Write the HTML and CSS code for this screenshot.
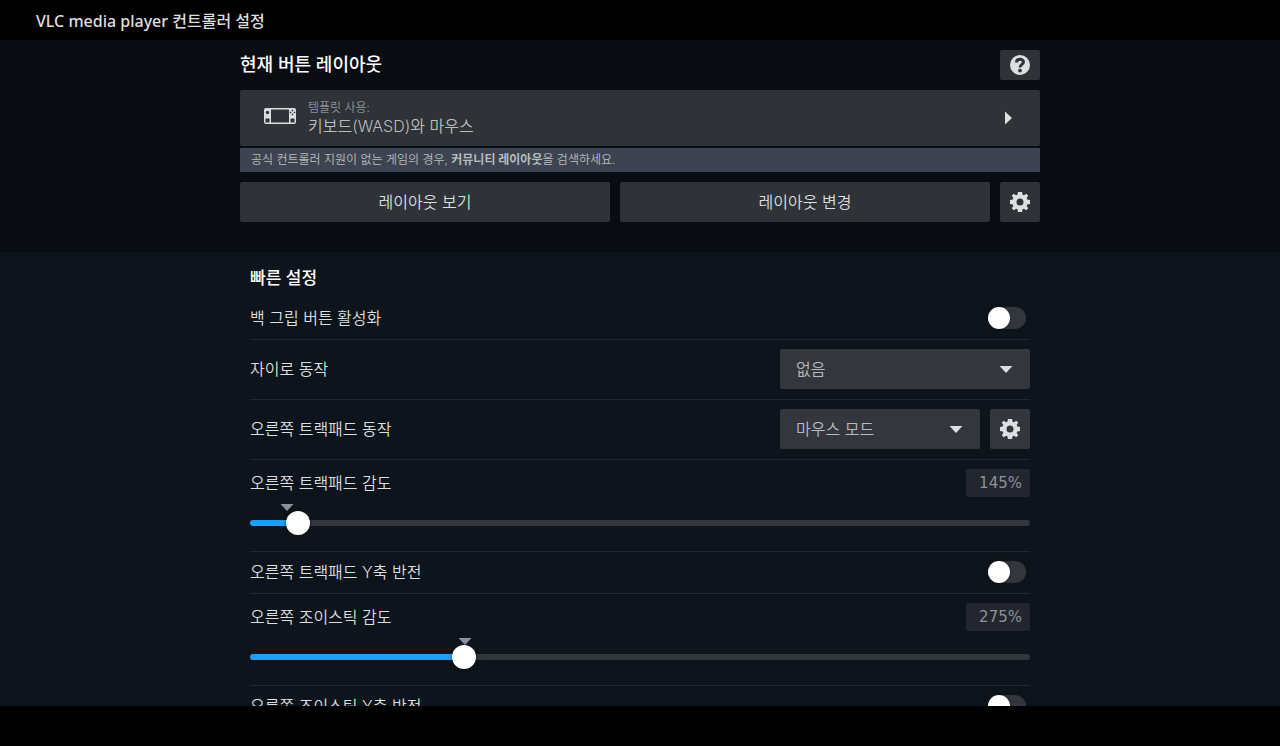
FILE: index.html
```html
<!DOCTYPE html>
<html lang="ko">
<head>
    <meta charset="UTF-8">
    <meta name="viewport" content="width=device-width, initial-scale=1.0">
    <title>VLC media player 컨트롤러 설정</title>
    <link rel="stylesheet" href="styles.css">
</head>
<body>
    <!-- shared icons -->
    <svg class="sprite" aria-hidden="true">
        <symbol id="gear" viewBox="0 0 20 20">
            <path fill-rule="evenodd" d="M8 0h4l.6 2.7 1.3.6L16.300 1.800 18.200 3.700 16.700 6.100 17.300 7.400 20 8v4l-2.700.6-.6 1.300 1.500 2.400-1.900 1.900-2.400-1.500-1.300.6L12 20H8l-.6-2.700-1.300-.6-2.400 1.500-1.900-1.900 1.500-2.400-.6-1.300L0 12V8l2.700-.6.6-1.300L1.800 3.700 3.700 1.800l2.400 1.500 1.300-.6zM10 6.500a3.500 3.500 0 1 0 0 7a3.500 3.500 0 0 0 0-7z"/>
        </symbol>
    </svg>

    <header class="titlebar">VLC media player 컨트롤러 설정</header>

    <main class="content">
        <section class="current">
            <div class="column">
                <div class="current-head">
                    <h1>현재 버튼 레이아웃</h1>
                    <button class="icon-button short" aria-label="도움말">
                        <svg width="20" height="20" viewBox="0 0 20 20">
                            <circle cx="10" cy="10" r="10"/>
                            <path class="cut-line" d="M6.500 7.500C6.500 3.300 13.500 3.300 13.500 7c0 2.400-3.500 2.400-3.500 5.500"/>
                            <circle class="cut" cx="10" cy="15.600" r="1.900"/>
                        </svg>
                    </button>
                </div>

                <button class="layout-card">
                    <svg class="deck" width="32" height="16" viewBox="0 0 32 16">
                        <path fill-rule="evenodd" d="M2 0h28a2 2 0 0 1 2 2v12a2 2 0 0 1-2 2H2a2 2 0 0 1-2-2V2a2 2 0 0 1 2-2zM7 1.500v13h18v-13z"/>
                        <circle class="cut" cx="3.500" cy="4.500" r="1.700"/>
                        <rect class="cut" x="1.500" y="10.500" width="4" height="4" rx=".6"/>
                        <rect class="cut" x="26.500" y="10.500" width="4" height="4" rx=".6"/>
                        <path class="cut" d="M27.700 1.800h1.500v1.500h-1.500zM27.700 5.700h1.500v1.500h-1.500zM25.800 3.700h1.500v1.500h-1.500zM29.700 3.700h1.500v1.500h-1.500z"/>
                    </svg>
                    <span class="layout-text">
                        <span class="layout-kind">템플릿 사용:</span>
                        <span class="layout-name">키보드(WASD)와 마우스</span>
                    </span>
                    <svg width="7" height="14" viewBox="0 0 7 14"><path d="M0 0.500l7 6.500-7 6.500z"/></svg>
                </button>
                <p class="notice">공식 컨트롤러 지원이 없는 게임의 경우, <b>커뮤니티 레이아웃</b>을 검색하세요.</p>

                <div class="actions">
                    <button class="action">레이아웃 보기</button>
                    <button class="action">레이아웃 변경</button>
                    <button class="icon-button" aria-label="레이아웃 설정"><svg width="20" height="20"><use href="#gear"/></svg></button>
                </div>
            </div>
        </section>

        <section class="quick">
            <h2>빠른 설정</h2>

            <div class="row">
                <label for="backGrip">백 그립 버튼 활성화</label>
                <input class="toggle" type="checkbox" id="backGrip">
            </div>

            <div class="row">
                <label for="gyro">자이로 동작</label>
                <div class="select-box wide">
                    <select id="gyro"><option>없음</option></select>
                    <svg width="14" height="7" viewBox="0 0 14 7"><path d="M.5 0h13L7 7z"/></svg>
                </div>
            </div>

            <div class="row">
                <label for="rightPad">오른쪽 트랙패드 동작</label>
                <div class="select-box">
                    <select id="rightPad"><option>마우스 모드</option></select>
                    <svg width="14" height="7" viewBox="0 0 14 7"><path d="M.5 0h13L7 7z"/></svg>
                </div>
                <button class="icon-button light" aria-label="트랙패드 설정"><svg width="20" height="20"><use href="#gear"/></svg></button>
            </div>

            <div class="slider-row">
                <div class="slider-head">
                    <label for="padSense">오른쪽 트랙패드 감도</label>
                    <output class="amount" for="padSense">145%</output>
                </div>
                <div class="slider">
                    <svg class="marker" style="left: 4.7%" width="14" height="7" viewBox="0 0 14 7"><path d="M.5 0h13L7 7z"/></svg>
                    <input type="range" id="padSense" min="117" max="709" value="145" style="--fill: 6%">
                </div>
            </div>

            <div class="row">
                <label for="padInvert">오른쪽 트랙패드 Y축 반전</label>
                <input class="toggle" type="checkbox" id="padInvert">
            </div>

            <div class="slider-row">
                <div class="slider-head">
                    <label for="stickSense">오른쪽 조이스틱 감도</label>
                    <output class="amount" for="stickSense">275%</output>
                </div>
                <div class="slider">
                    <svg class="marker" style="left: 27.5%" width="14" height="7" viewBox="0 0 14 7"><path d="M.5 0h13L7 7z"/></svg>
                    <input type="range" id="stickSense" min="117" max="709" value="275" style="--fill: 27%">
                </div>
            </div>

            <div class="row">
                <label for="stickInvert">오른쪽 조이스틱 Y축 반전</label>
                <input class="toggle" type="checkbox" id="stickInvert">
            </div>
        </section>
    </main>

    <footer class="footer"></footer>
</body>
</html>
```
FILE: styles.css
```css
* {
    box-sizing: border-box;
}

body {
    display: flex;
    flex-direction: column;
    height: 100vh;
    margin: 0;
    overflow: hidden;
    background: #000;
    color: #dcdedf;
    font-family: Inter, "Noto Sans CJK KR", sans-serif;
    font-size: 16px;
    font-weight: 350;
    line-height: 20px;
}

h1, h2, p {
    margin: 0;
}

button, select, input {
    font: inherit;
    color: inherit;
    border: none;
    margin: 0;
}

button {
    cursor: pointer;
}

svg {
    display: block;
    flex: none;
    fill: #dcdedf;
}

.sprite {
    position: absolute;
    width: 0;
    height: 0;
}

.titlebar {
    flex: none;
    padding: 11px 36px 9px;
    font-family: "Noto Sans", "Noto Sans CJK KR", sans-serif;
    font-weight: 500;
}

.content {
    flex: 1;
    min-height: 0;
    overflow: hidden;
    background: #0e141b;
}

.footer {
    flex: none;
    height: 40px;
}

/* Current layout */
.current {
    padding: 10px 20px 30px;
    background: #090c11;
}

.column {
    max-width: 800px;
    margin: 0 auto;
}

.current-head {
    display: flex;
    justify-content: space-between;
    align-items: center;
    margin-bottom: 10px;
}

h1 {
    color: #fff;
    font-size: 18px;
    font-weight: 500;
}

.icon-button {
    display: flex;
    flex: none;
    justify-content: center;
    align-items: center;
    width: 40px;
    height: 40px;
    padding: 0;
    border-radius: 2px;
    background: #2f3237;
}

.icon-button.short {
    height: 30px;
}

.icon-button.light {
    background: #33363d;
}

.cut {
    fill: #2f3237;
}

.cut-line {
    fill: none;
    stroke: #2f3237;
    stroke-width: 3;
}

.layout-card {
    display: flex;
    align-items: center;
    width: 100%;
    height: 56px;
    padding: 0 28px 0 24px;
    border-radius: 2px;
    background: #2f3237;
    text-align: left;
}

.deck {
    margin-bottom: 4px;
}

.layout-text {
    display: flex;
    flex: 1;
    flex-direction: column;
    padding-left: 12px;
}

.layout-kind {
    color: #8b929a;
    font-size: 12px;
    line-height: 16px;
}

.layout-name {
    color: #b8bcbf;
}

.notice {
    margin-top: 2px;
    padding: 0 11px;
    background: #3d4450;
    color: #b8bcbf;
    font-size: 12px;
    line-height: 24px;
}

.notice b {
    font-weight: 700;
}

.actions {
    display: flex;
    gap: 10px;
    margin-top: 10px;
}

.action {
    flex: 1;
    height: 40px;
    border-radius: 2px;
    background: #2f3237;
}

/* Quick settings */
.quick {
    max-width: 780px;
    margin: 0 auto;
    padding-top: 16px;
}

h2 {
    margin-bottom: 10px;
    color: #fff;
    font-size: 17px;
    font-weight: 500;
}

.row {
    display: flex;
    align-items: center;
    gap: 10px;
    padding: 9px 0 10px;
    border-bottom: 1px solid #23262e;
}

.row label {
    flex: 1;
}

.toggle {
    appearance: none;
    width: 38px;
    height: 22px;
    margin-right: 4px;
    border-radius: 11px;
    background: #33363d;
}

.toggle::before {
    content: "";
    display: block;
    width: 22px;
    height: 22px;
    border-radius: 50%;
    background: #fff;
    box-shadow: 0 0 4px rgba(0, 0, 0, 0.3);
}

.toggle:checked {
    background: #1a9fff;
}

.toggle:checked::before {
    margin-left: 16px;
}

.select-box {
    position: relative;
    width: 200px;
}

.select-box.wide {
    width: 250px;
}

.select-box select {
    appearance: none;
    display: block;
    width: 100%;
    height: 40px;
    padding: 0 40px 0 16px;
    border-radius: 2px;
    background: #33363d;
    color: #b8bcbf;
}

.select-box svg {
    position: absolute;
    top: 17px;
    right: 17px;
    pointer-events: none;
}

.slider-row {
    padding: 9px 0 16px;
    border-bottom: 1px solid #23262e;
}

.slider-head {
    display: flex;
    justify-content: space-between;
    align-items: center;
}

.amount {
    width: 64px;
    padding: 4px 8px;
    border-radius: 2px;
    background: #23262e;
    color: #8b929a;
    font-family: "DejaVu Sans", sans-serif;
    font-size: 15px;
    font-weight: 400;
    text-align: right;
}

.slider {
    position: relative;
    padding-top: 14px;
}

.marker {
    position: absolute;
    top: 7px;
    transform: translateX(-50%);
    fill: #8b929a;
}

.slider input {
    appearance: none;
    position: relative;
    display: block;
    width: 100%;
    height: 24px;
    background: transparent;
}

.slider input::-webkit-slider-runnable-track {
    height: 6px;
    border-radius: 3px;
    background: linear-gradient(to right, #1a9fff var(--fill), #33363d var(--fill));
}

.slider input::-webkit-slider-thumb {
    appearance: none;
    width: 24px;
    height: 24px;
    margin-top: -9px;
    border-radius: 50%;
    background: #fff;
    box-shadow: 0 0 4px rgba(0, 0, 0, 0.4);
}
```
